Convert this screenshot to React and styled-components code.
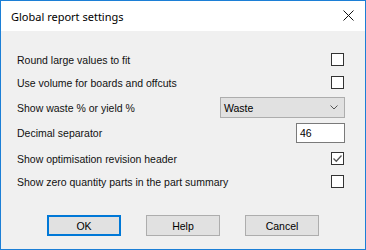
import React from 'react'
import styled, { createGlobalStyle } from 'styled-components'

const GlobalStyle = createGlobalStyle`
  html, body {
    margin: 0;
    padding: 0;
    background: #ffffff;
  }
`

const rows = [
  { label: 'Round large values to fit', kind: 'check', h: 23 },
  { label: 'Use volume for boards and offcuts', kind: 'check', h: 23 },
  { label: 'Show waste % or yield %', kind: 'select', h: 27 },
  { label: 'Decimal separator', kind: 'input', h: 24 },
  { label: 'Show optimisation revision header', kind: 'check', checked: true, h: 27 },
  { label: 'Show zero quantity parts in the part summary', kind: 'check', h: 19 },
]

function CheckBox({ checked }) {
  return (
    <Box>
      {checked && (
        <svg width="11" height="11" viewBox="0 0 11 11">
          <path d="M1.5 5.5 L4.3 8.3 L9.5 2.5" fill="none" stroke="#555" strokeWidth="1.3" />
        </svg>
      )}
    </Box>
  )
}

function App() {
  return (
    <>
      <GlobalStyle />
      <Window>
        <TitleBar>
          <Title>Global report settings</Title>
          <CloseButton>
            <svg width="11" height="11" viewBox="0 0 11 11">
              <path d="M0.5 0.5 L10.5 10.5 M10.5 0.5 L0.5 10.5" stroke="#111" strokeWidth="1" />
            </svg>
          </CloseButton>
        </TitleBar>
        <Body>
          <Rows>
            {rows.map((r) => (
              <Row key={r.label} h={r.h}>
                <Label>{r.label}</Label>
                {r.kind === 'check' && <CheckBox checked={r.checked} />}
                {r.kind === 'select' && (
                  <Select>
                    <span>Waste</span>
                    <svg width="8" height="5" viewBox="0 0 8 5">
                      <path d="M0.5 0.5 L4 4 L7.5 0.5" fill="none" stroke="#555" strokeWidth="1" />
                    </svg>
                  </Select>
                )}
                {r.kind === 'input' && <Input>46</Input>}
              </Row>
            ))}
          </Rows>
          <Buttons>
            <Button primary>OK</Button>
            <Button>Help</Button>
            <Button>Cancel</Button>
          </Buttons>
        </Body>
      </Window>
    </>
  )
}

export default App

const Window = styled.div`
  width: 366px;
  height: 250px;
  box-sizing: border-box;
  border: 1px solid #1c7fd6;
  display: flex;
  flex-direction: column;
  background: #f0f0f0;
  font-family: "Liberation Sans", Arial, sans-serif;
`

const TitleBar = styled.div`
  height: 30px;
  background: #ffffff;
  display: flex;
  align-items: center;
  justify-content: space-between;
  padding: 0 11px 0 10px;
`

const Title = styled.div`
  font-family: "Noto Sans", "Open Sans", sans-serif;
  font-size: 11px;
  color: #000;
  margin-top: 1px;
`

const CloseButton = styled.div`
  display: flex;
  align-items: center;
  margin-top: -2px;
`

const Body = styled.div`
  flex: 1;
  display: flex;
  flex-direction: column;
  padding: 17px 21px 0 16px;
`

const Rows = styled.div`
  display: flex;
  flex-direction: column;
`

const Row = styled.div`
  height: ${(p) => p.h}px;
  display: flex;
  align-items: center;
  justify-content: space-between;
`

const Label = styled.div`
  font-size: 10.5px;
  color: #111;
  white-space: nowrap;
`

const Box = styled.div`
  width: 13px;
  height: 13px;
  box-sizing: border-box;
  border: 1px solid #333;
  background: #fff;
  display: flex;
  align-items: center;
  justify-content: center;
`

const Select = styled.div`
  width: 125px;
  height: 21px;
  box-sizing: border-box;
  border: 1px solid #adadad;
  background: #e1e1e1;
  display: flex;
  align-items: center;
  justify-content: space-between;
  padding: 0 6px 0 3px;
  font-size: 10.5px;
  margin-right: -1px;
`

const Input = styled.div`
  width: 49px;
  height: 20px;
  box-sizing: border-box;
  border: 1px solid #7a7a7a;
  background: #fff;
  display: flex;
  align-items: center;
  padding-left: 3px;
  font-size: 10.5px;
  margin-right: -1px;
`

const Buttons = styled.div`
  display: flex;
  gap: 25px;
  margin-top: 24px;
  padding-left: 30px;
`

const Button = styled.div`
  width: 74px;
  height: 21px;
  box-sizing: border-box;
  border: ${(p) => (p.primary ? '2px solid #0078d7' : '1px solid #adadad')};
  background: #e1e1e1;
  display: flex;
  align-items: center;
  justify-content: center;
  font-size: 10.5px;
  color: #000;
`
